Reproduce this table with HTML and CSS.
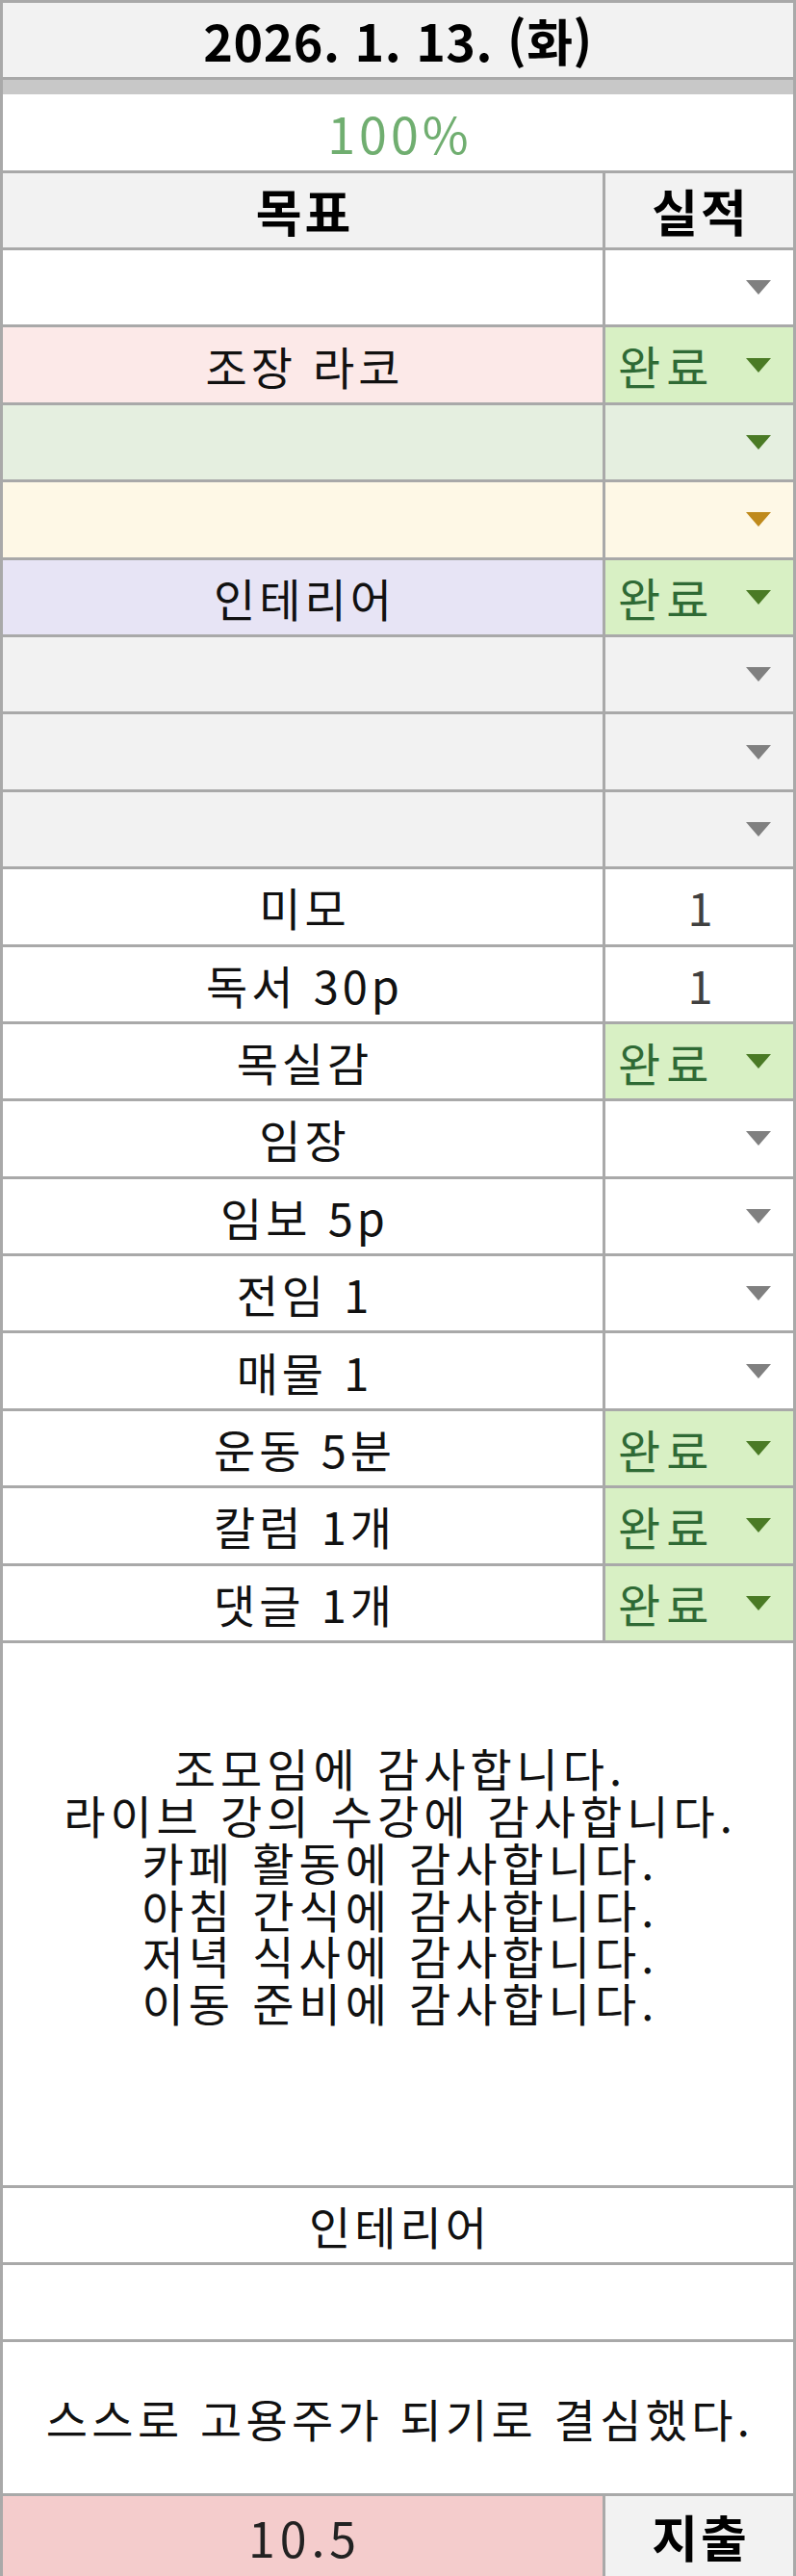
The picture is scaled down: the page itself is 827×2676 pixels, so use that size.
FILE: index.html
```html
<!DOCTYPE html>
<html lang="ko">
<head>
<meta charset="utf-8">
<title>2026. 1. 13. (화)</title>
<link rel="stylesheet" href="styles.css">
</head>
<body>
<div class="sheet">
  <div class="date-row">2026. 1. 13. (화)</div>
  <div class="band"></div>
  <div class="pct-row">100%</div>

  <div class="row head">
    <div class="goal">목표</div>
    <div class="res">실적</div>
  </div>

  <div class="row">
    <div class="goal"></div>
    <div class="res drop"><svg class="arrow gray" viewBox="0 0 26 15"><polygon points="0,0 26,0 13,15"/></svg></div>
  </div>
  <div class="row pink">
    <div class="goal">조장 라코</div>
    <div class="res done"><span>완료</span><svg class="arrow green" viewBox="0 0 26 15"><polygon points="0,0 26,0 13,15"/></svg></div>
  </div>
  <div class="row mint">
    <div class="goal"></div>
    <div class="res drop"><svg class="arrow green" viewBox="0 0 26 15"><polygon points="0,0 26,0 13,15"/></svg></div>
  </div>
  <div class="row cream">
    <div class="goal"></div>
    <div class="res drop"><svg class="arrow orange" viewBox="0 0 26 15"><polygon points="0,0 26,0 13,15"/></svg></div>
  </div>
  <div class="row lavender">
    <div class="goal">인테리어</div>
    <div class="res done"><span>완료</span><svg class="arrow green" viewBox="0 0 26 15"><polygon points="0,0 26,0 13,15"/></svg></div>
  </div>
  <div class="row grey">
    <div class="goal"></div>
    <div class="res drop"><svg class="arrow gray" viewBox="0 0 26 15"><polygon points="0,0 26,0 13,15"/></svg></div>
  </div>
  <div class="row grey">
    <div class="goal"></div>
    <div class="res drop"><svg class="arrow gray" viewBox="0 0 26 15"><polygon points="0,0 26,0 13,15"/></svg></div>
  </div>
  <div class="row grey">
    <div class="goal"></div>
    <div class="res drop"><svg class="arrow gray" viewBox="0 0 26 15"><polygon points="0,0 26,0 13,15"/></svg></div>
  </div>
  <div class="row">
    <div class="goal">미모</div>
    <div class="res num">1</div>
  </div>
  <div class="row">
    <div class="goal">독서 30p</div>
    <div class="res num">1</div>
  </div>
  <div class="row">
    <div class="goal">목실감</div>
    <div class="res done"><span>완료</span><svg class="arrow green" viewBox="0 0 26 15"><polygon points="0,0 26,0 13,15"/></svg></div>
  </div>
  <div class="row">
    <div class="goal">임장</div>
    <div class="res drop"><svg class="arrow gray" viewBox="0 0 26 15"><polygon points="0,0 26,0 13,15"/></svg></div>
  </div>
  <div class="row">
    <div class="goal">임보 5p</div>
    <div class="res drop"><svg class="arrow gray" viewBox="0 0 26 15"><polygon points="0,0 26,0 13,15"/></svg></div>
  </div>
  <div class="row">
    <div class="goal">전임 1</div>
    <div class="res drop"><svg class="arrow gray" viewBox="0 0 26 15"><polygon points="0,0 26,0 13,15"/></svg></div>
  </div>
  <div class="row">
    <div class="goal">매물 1</div>
    <div class="res drop"><svg class="arrow gray" viewBox="0 0 26 15"><polygon points="0,0 26,0 13,15"/></svg></div>
  </div>
  <div class="row">
    <div class="goal">운동 5분</div>
    <div class="res done"><span>완료</span><svg class="arrow green" viewBox="0 0 26 15"><polygon points="0,0 26,0 13,15"/></svg></div>
  </div>
  <div class="row">
    <div class="goal">칼럼 1개</div>
    <div class="res done"><span>완료</span><svg class="arrow green" viewBox="0 0 26 15"><polygon points="0,0 26,0 13,15"/></svg></div>
  </div>
  <div class="row">
    <div class="goal">댓글 1개</div>
    <div class="res done"><span>완료</span><svg class="arrow green" viewBox="0 0 26 15"><polygon points="0,0 26,0 13,15"/></svg></div>
  </div>

  <div class="thanks">
    <p>조모임에 감사합니다.</p>
    <p>라이브 강의 수강에 감사합니다.</p>
    <p>카페 활동에 감사합니다.</p>
    <p>아침 간식에 감사합니다.</p>
    <p>저녁 식사에 감사합니다.</p>
    <p>이동 준비에 감사합니다.</p>
  </div>
  <div class="wide">인테리어</div>
  <div class="wide"></div>
  <div class="wide tall">스스로 고용주가 되기로 결심했다.</div>
  <div class="row foot">
    <div class="goal">10.5</div>
    <div class="res">지출</div>
  </div>
</div>
</body>
</html>
```

FILE: styles.css
```css
* { box-sizing: border-box; }

html, body {
  margin: 0;
  padding: 0;
  background: #ffffff;
}

body {
  width: 827px;
  font-family: "Noto Sans CJK KR", "Noto Sans", sans-serif;
  font-size: 47px;
  letter-spacing: 4px;
  color: #111;
}

.sheet {
  width: 827px;
  border-left: 3px solid #a9a9a9;
  border-right: 3px solid #a9a9a9;
  border-top: 3px solid #a9a9a9;
}

.date-row {
  height: 80px;
  background: #f2f2f2;
  border-bottom: 3px solid #a9a9a9;
  display: flex;
  align-items: center;
  justify-content: center;
  font-weight: 700;
  font-size: 52px;
  letter-spacing: 0.5px;
  color: #000;
}

.band {
  height: 15px;
  background: #c8c8c8;
}

.pct-row {
  height: 82px;
  border-bottom: 3px solid #a9a9a9;
  display: flex;
  align-items: center;
  justify-content: center;
  padding-left: 4px;
  color: #70ae70;
  font-size: 52px;
  letter-spacing: 4px;
}

.row {
  display: flex;
  height: 80.4px;
  border-bottom: 3px solid #a9a9a9;
}

.row .goal {
  width: 623px;
  display: flex;
  align-items: center;
  justify-content: center;
  padding-left: 4px;
  white-space: nowrap;
}

.row .res {
  flex: 1;
  border-left: 3px solid #a9a9a9;
  display: flex;
  align-items: center;
  justify-content: center;
  white-space: nowrap;
}

.head {
  height: 80px;
  background: #f2f2f2;
  font-weight: 700;
  font-size: 52px;
  letter-spacing: 3px;
  color: #000;
}

.head .res {
  padding-left: 3px;
}

.res.drop {
  justify-content: flex-end;
  padding-right: 23px;
}

.res.done {
  background: #d8f0c4;
  justify-content: space-between;
  padding-left: 13px;
  padding-right: 23px;
  color: #2f6a35;
  font-size: 48px;
  letter-spacing: 6px;
}

.res.num {
  color: #404040;
  padding-left: 6px;
}

.arrow {
  width: 26px;
  height: 15px;
  display: block;
}

.arrow.gray { fill: #808080; }
.arrow.green { fill: #4a7a25; }
.arrow.orange { fill: #bf8a1c; }

.pink .goal { background: #fce9e8; }
.mint { background: #e5efe0; }
.cream { background: #fef8e6; }
.lavender .goal { background: #e7e4f5; }
.grey { background: #f2f2f2; }

.thanks {
  height: 566px;
  border-bottom: 3px solid #a9a9a9;
  display: flex;
  flex-direction: column;
  justify-content: center;
  align-items: center;
  padding-bottom: 60px;
  padding-left: 5px;
  line-height: 48.8px;
  letter-spacing: 5px;
  color: #111;
}

.thanks p {
  margin: 0;
}

.wide {
  height: 80px;
  border-bottom: 3px solid #a9a9a9;
  display: flex;
  align-items: center;
  justify-content: center;
  padding-left: 4px;
}

.wide.tall {
  height: 160px;
  letter-spacing: 4.3px;
}

.foot {
  height: 83px;
  border-bottom: none;
}

.foot .goal {
  background: #f4cccc;
  color: #222;
  font-size: 50px;
  letter-spacing: 5px;
}

.foot .res {
  background: #f2f2f2;
  font-weight: 700;
  font-size: 52px;
  letter-spacing: 3px;
  padding-left: 3px;
  color: #000;
}
```
